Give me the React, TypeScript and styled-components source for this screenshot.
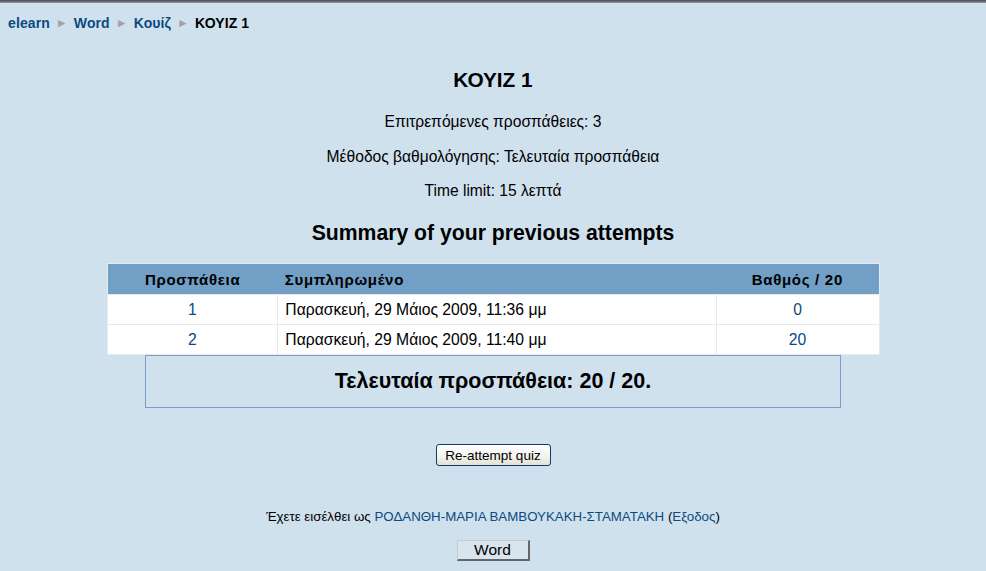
import React from "react";
import styled, { createGlobalStyle } from "styled-components";

const Global = createGlobalStyle`
  html, body { margin: 0; padding: 0; background: #d0e1ee; }
  body { font-family: "Liberation Sans", Arial, sans-serif; color: #000; }
  a { color: #0a4a80; text-decoration: none; }
`;

const Page = styled.div`
  width: 986px;
  height: 571px;
  overflow: hidden;
  background: #d0e1ee;
`;

const TopBar = styled.div`
  height: 3px;
  background: linear-gradient(#4a4f55, #6b7177 60%, #9aa3ab);
`;

const Nav = styled.nav`
  padding: 12px 8px 0;
  height: 16px;
  font-size: 14px;
  font-weight: bold;
  line-height: 16px;
  display: flex;
  align-items: center;
  gap: 6px;
  letter-spacing: 0.1px;
`;

const Crumb = styled.a`
  color: #0a4a80;
`;

const Sep = styled.span`
  color: #a3a3a3;
  font-size: 12px;
  font-weight: normal;
`;

const Current = styled.span`
  color: #000;
`;

const Main = styled.main`
  display: flex;
  flex-direction: column;
  align-items: center;
`;

const Title = styled.h2`
  margin: 37px 0 0;
  font-size: 20.8px;
  line-height: 24px;
  font-weight: bold;
`;

const Info = styled.p<{ $mt: number }>`
  margin: ${(p) => p.$mt}px 0 0;
  font-size: 15.6px;
  line-height: 18px;
`;

const Summary = styled.h3`
  margin: 21px 0 0;
  font-size: 21.2px;
  line-height: 24px;
  font-weight: bold;
`;

const Table = styled.table`
  margin-top: 18px;
  width: 773px;
  border-collapse: collapse;
  border: 1px solid #e9e9e9;
  background: #fff;
  font-size: 15.7px;
`;

const Th = styled.th<{ $align: string; $w: number }>`
  background: #729fc6;
  height: 31px;
  padding: 0 7px;
  font-size: 15px;
  letter-spacing: 0.7px;
  font-weight: bold;
  text-align: ${(p) => p.$align};
  width: ${(p) => p.$w}px;
  box-sizing: border-box;
`;

const Td = styled.td<{ $align: string }>`
  height: 30px;
  padding: 0 7px;
  text-align: ${(p) => p.$align};
  border: 1px solid #e9e9e9;
  box-sizing: border-box;
`;

const ResultBox = styled.div`
  width: 696px;
  height: 53px;
  box-sizing: border-box;
  border: 1px solid #76a0c9;
  display: flex;
  align-items: center;
  justify-content: center;
  font-size: 21.5px;
  font-weight: bold;
`;

const AttemptButton = styled.button`
  margin-top: 36px;
  width: 115px;
  height: 22px;
  border: 1px solid #0d3c6e;
  border-radius: 3px;
  background: linear-gradient(#ffffff, #f3f2ec 60%, #e2e0d6);
  font-family: "Liberation Sans", Arial, sans-serif;
  font-size: 13.5px;
  color: #000;
  padding: 0;
`;

const Footer = styled.div`
  margin-top: 43px;
  font-size: 13.3px;
  line-height: 16px;
`;

const WordButton = styled.button`
  margin-top: 15px;
  width: 73px;
  height: 21px;
  border-style: solid;
  border-width: 1px 2px 2px 1px;
  border-color: #c8c8c8 #666 #666 #c8c8c8;
  background: #d8e4ee;
  font-family: "Liberation Sans", Arial, sans-serif;
  font-size: 15.5px;
  color: #000;
  padding: 0;
`;

const attempts = [
  { n: "1", date: "Παρασκευή, 29 Μάιος 2009, 11:36 μμ", grade: "0" },
  { n: "2", date: "Παρασκευή, 29 Μάιος 2009, 11:40 μμ", grade: "20" },
];

export default function App() {
  return (
    <Page>
      <Global />
      <TopBar />
      <Nav>
        <Crumb href="#">elearn</Crumb>
        <Sep>►</Sep>
        <Crumb href="#">Word</Crumb>
        <Sep>►</Sep>
        <Crumb href="#">Κουίζ</Crumb>
        <Sep>►</Sep>
        <Current>ΚΟΥΙΖ 1</Current>
      </Nav>
      <Main>
        <Title>ΚΟΥΙΖ 1</Title>
        <Info $mt={21}>Επιτρεπόμενες προσπάθειες: 3</Info>
        <Info $mt={17}>Μέθοδος βαθμολόγησης: Τελευταία προσπάθεια</Info>
        <Info $mt={16}>Time limit: 15 λεπτά</Info>
        <Summary>Summary of your previous attempts</Summary>
        <Table>
          <thead>
            <tr>
              <Th $align="center" $w={171}>Προσπάθεια</Th>
              <Th $align="left" $w={439}>Συμπληρωμένο</Th>
              <Th $align="center" $w={163}>Βαθμός / 20</Th>
            </tr>
          </thead>
          <tbody>
            {attempts.map((a) => (
              <tr key={a.n}>
                <Td $align="center"><a href="#">{a.n}</a></Td>
                <Td $align="left">{a.date}</Td>
                <Td $align="center"><a href="#">{a.grade}</a></Td>
              </tr>
            ))}
          </tbody>
        </Table>
        <ResultBox>Τελευταία προσπάθεια: 20 / 20.</ResultBox>
        <AttemptButton>Re-attempt quiz</AttemptButton>
        <Footer>
          Έχετε εισέλθει ως <a href="#">ΡΟΔΑΝΘΗ-ΜΑΡΙΑ ΒΑΜΒΟΥΚΑΚΗ-ΣΤΑΜΑΤΑΚΗ</a> (<a href="#">Εξοδος</a>)
        </Footer>
        <WordButton>Word</WordButton>
      </Main>
    </Page>
  );
}
